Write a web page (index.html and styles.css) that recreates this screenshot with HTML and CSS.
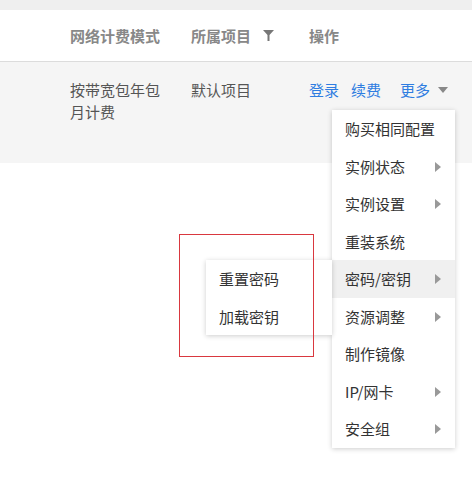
FILE: index.html
```html
<!DOCTYPE html>
<html lang="zh-CN">
<head>
    <meta charset="UTF-8">
    <meta name="viewport" content="width=device-width, initial-scale=1.0">
    <title>实例列表</title>
    <link rel="stylesheet" href="styles.css">
</head>
<body>

<div class="page">
    <div class="topbar"></div>

    <div class="grid-row head">
        <div class="cell">网络计费模式</div>
        <div class="cell">所属项目
            <svg class="filter" width="11" height="11" viewBox="0 0 11 11">
                <path d="M0 0 H11 L6.5 5 V11 H4.5 V5 Z" fill="#777"/>
            </svg>
        </div>
        <div class="cell">操作</div>
    </div>

    <div class="grid-row body-row">
        <div class="cell">按带宽包年包月计费</div>
        <div class="cell">默认项目</div>
        <div class="cell ops">
            <a href="#">登录</a>
            <a href="#">续费</a>
            <a href="#" class="more">更多</a>
            <span class="caret"></span>
        </div>
    </div>

    <!-- dropdown opened from "更多" -->
    <ul class="menu">
        <li>购买相同配置</li>
        <li class="has-sub">实例状态</li>
        <li class="has-sub">实例设置</li>
        <li>重装系统</li>
        <li class="has-sub active">密码/密钥
            <ul class="submenu">
                <li>重置密码</li>
                <li>加载密钥</li>
            </ul>
        </li>
        <li class="has-sub">资源调整</li>
        <li>制作镜像</li>
        <li class="has-sub">IP/网卡</li>
        <li class="has-sub">安全组</li>
    </ul>

    <div class="mark"></div>
</div>

</body>
</html>
```

FILE: styles.css
```css
body {
    margin: 0;
    font-family: "Noto Sans CJK SC", "Microsoft YaHei", sans-serif;
    font-size: 15px;
    background: #fff;
}

.page {
    position: relative;
    width: 472px;
    height: 494px;
    overflow: hidden;
}

.topbar {
    height: 10px;
    background-color: #efefef;
}

.grid-row {
    display: grid;
    grid-template-columns: 121px 118px 1fr;
    padding-left: 70px;
}

.head {
    height: 51px;
    align-items: center;
    border-bottom: 1px solid #dcdcdc;
    color: #888;
    font-weight: bold;
}

.head .cell {
    display: flex;
    align-items: center;
}

.filter {
    margin-left: 12px;
}

.body-row {
    height: 84px;
    padding-top: 17px;
    background-color: #f5f5f5;
    color: #555;
    line-height: 22px;
}

.body-row .cell:first-child {
    width: 92px;
}

.ops {
    display: flex;
    align-items: flex-start;
}

.ops a {
    color: #2f7de1;
    text-decoration: none;
    margin-right: 12px;
}

.ops a.more {
    margin-left: 7px;
    margin-right: 8px;
}

.caret {
    margin-top: 8px;
    width: 0;
    height: 0;
    border-left: 5px solid transparent;
    border-right: 5px solid transparent;
    border-top: 6px solid #888;
}

.menu {
    position: absolute;
    left: 332px;
    top: 110px;
    width: 123px;
    margin: 0;
    padding: 0;
    list-style: none;
    background: #fff;
    box-shadow: 0 1px 5px rgba(0, 0, 0, 0.2);
    color: #333;
}

.menu li {
    position: relative;
    height: 37.5px;
    line-height: 37.5px;
    padding-left: 13px;
}

.menu li.has-sub::after {
    content: "";
    position: absolute;
    right: 14px;
    top: 14px;
    width: 0;
    height: 0;
    border-top: 5px solid transparent;
    border-bottom: 5px solid transparent;
    border-left: 6px solid #999;
}

.menu li.active {
    background-color: #f0f0f0;
}

.submenu {
    position: absolute;
    right: 100%;
    top: 0;
    width: 126px;
    margin: 0;
    padding: 0;
    list-style: none;
    background: #fff;
    box-shadow: 0 1px 5px rgba(0, 0, 0, 0.2);
}

.submenu li {
    padding-left: 13px;
}

.mark {
    position: absolute;
    left: 179px;
    top: 234px;
    width: 135px;
    height: 123px;
    box-sizing: border-box;
    border: 1px solid #d9383f;
    z-index: 2;
}
```
